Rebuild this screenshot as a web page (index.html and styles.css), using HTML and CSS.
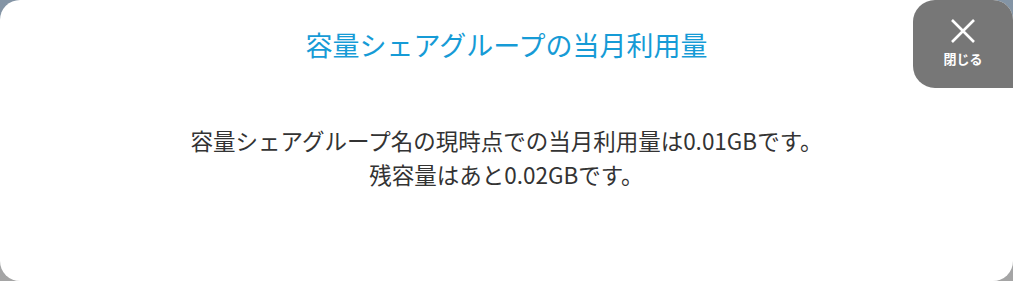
FILE: index.html
```html
<!DOCTYPE html>
<html lang="ja">
<head>
    <meta charset="UTF-8">
    <meta name="viewport" content="width=device-width, initial-scale=1.0">
    <title>容量シェアグループの当月利用量</title>
    <link rel="stylesheet" href="styles.css">
</head>
<body>

<div class="modal">
    <h1 class="modal-title">容量シェアグループの当月利用量</h1>
    <div class="modal-body">
        <p>容量シェアグループ名の現時点での当月利用量は0.01GBです。<br>残容量はあと0.02GBです。</p>
    </div>
    <button class="close-btn" type="button">
        <svg width="26" height="26" viewBox="0 0 26 26">
            <path d="M2 2 L24 24 M24 2 L2 24" stroke="#fff" stroke-width="2.6" fill="none"/>
        </svg>
        <span>閉じる</span>
    </button>
</div>

</body>
</html>
```

FILE: styles.css
```css
body {
    margin: 0;
    height: 281px;
    background: linear-gradient(#8394a5, #a5a5a5);
    font-family: "Noto Sans CJK JP", "Noto Sans", sans-serif;
    overflow: hidden;
}
.modal {
    position: relative;
    height: 281px;
    background: #fff;
    border-radius: 20px;
    overflow: hidden;
    box-sizing: border-box;
    padding-top: 26px;
    text-align: center;
}
.modal-title {
    margin: 0;
    font-size: 27px;
    font-weight: 400;
    line-height: 38px;
    color: #169bd6;
}
.modal-body {
    padding-top: 59px;
}
.modal-body p {
    margin: 0;
    font-size: 22.5px;
    line-height: 34px;
    color: #333;
}
.close-btn {
    position: absolute;
    top: 0;
    right: 0;
    width: 100px;
    height: 88px;
    border: none;
    background: #777;
    border-radius: 22px 0 0 22px;
    color: #fff;
    font-family: inherit;
    font-size: 13px;
    font-weight: 700;
    display: flex;
    flex-direction: column;
    align-items: center;
    padding: 18px 0 0;
    cursor: pointer;
}
.close-btn span {
    margin-top: 5px;
}
```
